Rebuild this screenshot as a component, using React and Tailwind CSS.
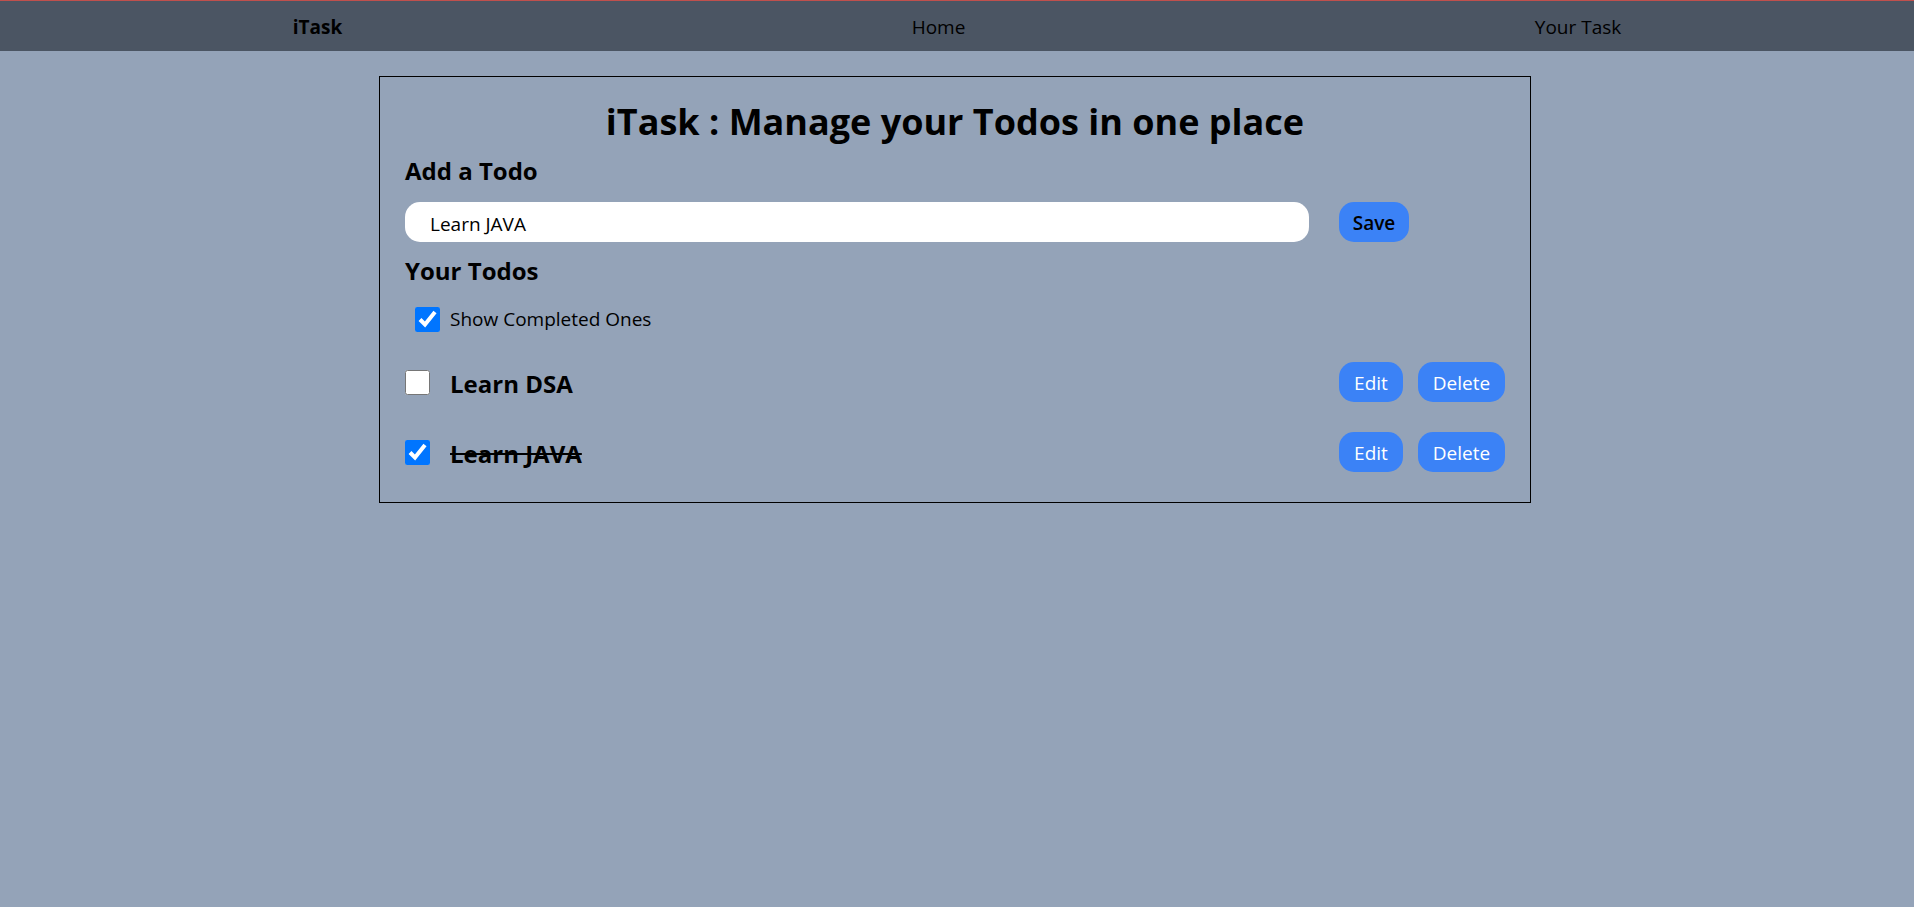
import { useState } from "react";

const pill =
  "h-10 rounded-[15px] bg-[#3b82f6] pt-0.5 text-center text-[19px] leading-[25px]";

function Navbar() {
  return (
    <nav className="border-t border-[#c0504d] bg-[#4b5563]">
      <ul className="flex h-[50px] items-center justify-around px-2 pt-0.5 text-[19px] leading-[30px]">
        <li className="font-bold">iTask</li>
        <li>
          <a href="#home">Home</a>
        </li>
        <li>
          <a href="#tasks">Your Task</a>
        </li>
      </ul>
    </nav>
  );
}

function TodoRow({ todo, onToggle, onEdit, onDelete }) {
  return (
    <li className="flex h-10 items-center justify-between">
      <div className="flex items-center gap-5">
        <input
          id={`todo-${todo.id}`}
          type="checkbox"
          checked={todo.done}
          onChange={onToggle}
          className="size-[25px]"
        />
        <label
          htmlFor={`todo-${todo.id}`}
          className={`pt-0.5 text-2xl leading-[35px] font-bold ${todo.done ? "line-through" : ""}`}
        >
          {todo.text}
        </label>
      </div>
      <div className="flex gap-[15px]">
        <button type="button" onClick={onEdit} className={`${pill} w-16 text-white`}>
          Edit
        </button>
        <button type="button" onClick={onDelete} className={`${pill} w-[87px] text-white`}>
          Delete
        </button>
      </div>
    </li>
  );
}

export default function App() {
  const [text, setText] = useState("Learn JAVA");
  const [showDone, setShowDone] = useState(true);
  const [todos, setTodos] = useState([
    { id: 1, text: "Learn DSA", done: false },
    { id: 2, text: "Learn JAVA", done: true },
  ]);

  const remove = (id) => setTodos(todos.filter((t) => t.id !== id));
  const toggle = (id) =>
    setTodos(todos.map((t) => (t.id === id ? { ...t, done: !t.done } : t)));
  const edit = (todo) => {
    setText(todo.text);
    remove(todo.id);
  };
  const save = (e) => {
    e.preventDefault();
    if (!text.trim()) return;
    setTodos([...todos, { id: Date.now(), text, done: false }]);
    setText("");
  };

  return (
    <div className="min-h-screen bg-[#94a3b8] font-['Open_Sans','Noto_Sans',sans-serif] text-black">
      <Navbar />
      <main className="pt-[25px] pr-1">
        <div className="mx-auto max-w-[1152px] border border-black px-[25px] pt-5 pb-[30px]">
          <h1 className="text-center text-4xl leading-[50px] font-bold">
            iTask : Manage your Todos in one place
          </h1>
          <h2 className="mt-1 text-2xl leading-10 font-bold">
            <label htmlFor="new-todo">Add a Todo</label>
          </h2>
          <form onSubmit={save} className="mt-[11px] flex gap-[30px]">
            <input
              id="new-todo"
              type="text"
              value={text}
              onChange={(e) => setText(e.target.value)}
              className="h-10 min-w-0 flex-1 rounded-[15px] bg-white px-[25px] pt-1 text-[19px]"
            />
            <div className="w-[166px]">
              <button type="submit" className={`${pill} w-[70px] font-semibold`}>
                Save
              </button>
            </div>
          </form>
          <h2 className="mt-[9px] text-2xl leading-10 font-bold">Your Todos</h2>
          <div className="mt-[11px] ml-[10px] flex h-[35px] items-center gap-[10px]">
            <input
              id="show-completed"
              type="checkbox"
              checked={showDone}
              onChange={() => setShowDone(!showDone)}
              className="size-[25px]"
            />
            <label htmlFor="show-completed" className="pb-0.5 text-[19px] leading-[30px]">
              Show Completed Ones
            </label>
          </div>
          <ul className="mt-[25px] flex flex-col gap-[30px]">
            {todos
              .filter((t) => showDone || !t.done)
              .map((t) => (
                <TodoRow
                  key={t.id}
                  todo={t}
                  onToggle={() => toggle(t.id)}
                  onEdit={() => edit(t)}
                  onDelete={() => remove(t.id)}
                />
              ))}
          </ul>
        </div>
      </main>
    </div>
  );
}
